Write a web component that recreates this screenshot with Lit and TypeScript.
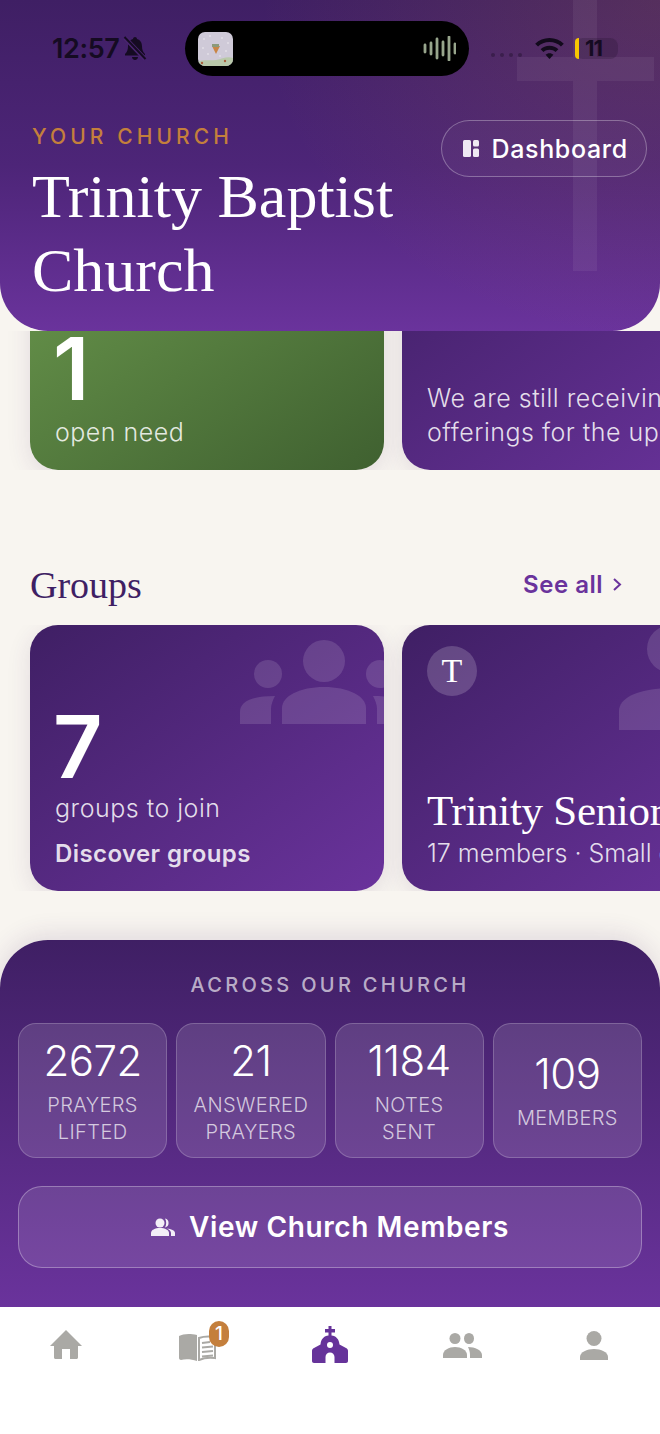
import { LitElement, html, css, svg } from "lit";
import { customElement } from "lit/decorators.js";

const peopleIcon = svg`
  <ellipse cx="84" cy="21" rx="21" ry="21"/>
  <ellipse cx="28" cy="34" rx="14" ry="14"/>
  <ellipse cx="140" cy="34" rx="14" ry="14"/>
  <path d="M42 84V68c0-12 18-21 42-21s42 9 42 21v16z"/>
  <path d="M0 84V72c0-10 10-16 35-16-2 4-4 8-4 13v15z"/>
  <path d="M168 84V72c0-10-10-16-35-16 2 4 4 8 4 13v15z"/>
`;

@customElement("app-root")
export class AppRoot extends LitElement {
  static styles = css`
    :host {
      display: block;
      width: 660px;
      height: 1434px;
      font-family: "Inter", "Liberation Sans", sans-serif;
      background: #f8f5f0;
      overflow: hidden;
    }
    .page { display: flex; flex-direction: column; height: 1434px; }
    .serif { font-family: "Liberation Serif", serif; }

    .hero {
      position: relative;
      z-index: 2;
      flex: none;
      height: 331px;
      box-sizing: border-box;
      border-radius: 0 0 48px 48px;
      overflow: hidden;
      background: linear-gradient(180deg, #3f1f64 0%, #4d2578 50%, #6a339c 100%);
    }
    .glow {
      position: absolute;
      inset: 0;
      background: radial-gradient(ellipse 400px 340px at 100% 0%, rgba(196,127,60,.17), rgba(196,127,60,0));
    }
    .cross { position: absolute; left: 517px; top: 0; fill: rgba(255,255,255,.06); }

    .status { position: relative; height: 97px; display: flex; align-items: flex-start; }
    .time { position: absolute; left: 52px; top: 33px; font-size: 27px; line-height: 32px; font-weight: 600; color: #150b22; letter-spacing: -.4px; }
    .bell { position: absolute; left: 123px; top: 36px; }
    .island { position: absolute; left: 185px; top: 21px; width: 284px; height: 55px; border-radius: 28px; background: #000; }
    .thumb { position: absolute; left: 13px; top: 11px; width: 35px; height: 34px; border-radius: 7px; overflow: hidden; }
    .wave { position: absolute; left: 238px; top: 15px; }
    .dots { position: absolute; left: 491px; top: 53px; display: flex; gap: 5px; }
    .dots i { width: 4px; height: 4px; border-radius: 50%; background: rgba(20,10,30,.35); }
    .wifi { position: absolute; left: 535px; top: 38px; }
    .battery { position: absolute; left: 575px; top: 38px; width: 43px; height: 21px; border-radius: 8px; background: rgba(20,10,30,.2); }
    .battery b { position: absolute; left: 0; top: 0; width: 4px; height: 21px; background: #f7c600; border-radius: 8px 0 0 8px; }
    .battery span { position: absolute; left: 10px; top: 0; font-size: 22px; line-height: 21px; font-weight: 700; color: #150b22; letter-spacing: -1px; }

    .hero-body { position: relative; display: flex; justify-content: space-between; padding: 0 13px 0 32px; }
    .eyebrow { margin-top: 27px; font-size: 21px; line-height: 26px; font-weight: 500; letter-spacing: 4.1px; color: #c47f3c; }
    .church { margin: 9px 0 0; font-size: 62px; line-height: 74px; font-weight: 400; color: #fff; width: 400px; }
    .dash {
      position: absolute;
      right: 13px;
      top: 23px;
      display: flex;
      align-items: center;
      gap: 13px;
      box-sizing: border-box;
      width: 206px;
      height: 57px;
      padding-left: 20.5px;
      border-radius: 29px;
      border: 1.5px solid rgba(255,255,255,.3);
      color: #fff;
      font-size: 25px;
      font-weight: 500;
      letter-spacing: .65px;
      background: rgba(255,255,255,.03);
    }

    .scroll { flex: 1; min-height: 0; overflow: hidden; display: flex; flex-direction: column; }
    .rail { display: flex; gap: 18px; padding-left: 30px; flex: none; overflow: hidden; }
    .rail.top { margin-top: -127px; }
    .card {
      position: relative;
      flex: none;
      box-sizing: border-box;
      width: 354px;
      height: 266px;
      border-radius: 28px;
      overflow: hidden;
      color: #fff;
      padding: 0 25px;
      display: flex;
      flex-direction: column;
      justify-content: flex-end;
      background: linear-gradient(145deg, #3f1f64 0%, #6a339c 100%);
      box-shadow: 0 6px 24px rgba(63,31,100,.12);
    }
    .card.green { background: linear-gradient(145deg, #6c9a4e 0%, #3f6030 100%); }
    .big { font-size: 86px; line-height: 88px; font-weight: 600; letter-spacing: -1px; margin-left: -2px; }
    .sub { font-size: 25px; line-height: 34px; font-weight: 300; color: rgba(255,255,255,.85); letter-spacing: .5px; white-space: nowrap; }
    .msg { padding-bottom: 21px; }
    .need { padding-bottom: 21px; }
    .need .big { margin-bottom: 2px; }
    .link { font-size: 24px; line-height: 30px; font-weight: 600; color: rgba(255,255,255,.85); margin-top: 14px; padding-bottom: 22px; letter-spacing: .4px; }
    .art { position: absolute; fill: rgba(255,255,255,.13); }
    .avatar {
      position: absolute; left: 25px; top: 21px; width: 50px; height: 50px; border-radius: 50%;
      background: rgba(255,255,255,.18); display: flex; align-items: center; justify-content: center;
      font-size: 34px;
    }
    .gtitle { font-size: 43px; line-height: 50px; white-space: nowrap; letter-spacing: -.3px; }
    .gsub { font-size: 25px; line-height: 34px; font-weight: 300; white-space: nowrap; color: rgba(255,255,255,.85); padding-bottom: 21px; }

    .head { display: flex; justify-content: space-between; align-items: center; padding: 81px 38px 7px 30px; height: 67px; flex: none; box-sizing: content-box; }
    .head h2 { margin: 0; font-size: 38px; line-height: 48px; font-weight: 400; color: #3f1f64; }
    .see { display: flex; align-items: center; gap: 9px; font-size: 24px; font-weight: 600; color: #6a339c; letter-spacing: .5px; }

    .across {
      flex: none;
      margin-top: 49px;
      height: 367px;
      box-sizing: border-box;
      padding: 30px 18px 0 18px;
      border-radius: 48px 48px 0 0;
      background: linear-gradient(180deg, #3f1f64 0%, #6a339c 100%);
      box-shadow: 0 -6px 24px rgba(63,31,100,.12);
      color: #fff;
    }
    .across h3 { margin: 0; text-align: center; font-size: 20px; line-height: 30px; font-weight: 500; letter-spacing: 3.3px; color: rgba(255,255,255,.65); }
    .stats { display: grid; grid-template-columns: repeat(4, 1fr); gap: 9px; margin-top: 23px; }
    .stat {
      box-sizing: border-box; height: 135px; border-radius: 18px;
      background: rgba(255,255,255,.125); border: 1.5px solid rgba(255,255,255,.2);
      display: flex; flex-direction: column; align-items: center; justify-content: center; text-align: center;
    }
    .num { font-size: 42px; line-height: 50px; font-weight: 300; letter-spacing: -.5px; margin-bottom: 6px; }
    .lab { font-size: 20px; line-height: 27px; font-weight: 300; letter-spacing: .4px; color: rgba(255,255,255,.72); text-transform: uppercase; }
    .btn {
      box-sizing: border-box; margin-top: 28px; height: 82px; border-radius: 24px;
      background: rgba(255,255,255,.11); border: 1.5px solid rgba(255,255,255,.3);
      display: flex; align-items: center; justify-content: center; gap: 14px;
      font-size: 28px; font-weight: 600; letter-spacing: .6px;
    }

    .nav { flex: none; height: 127px; background: #fff; display: grid; grid-template-columns: repeat(5, 132px); }
    .tab { position: relative; display: flex; justify-content: center; align-items: flex-start; color: #aaa9a5; fill: currentColor; padding-top: 19px; }
    .tab.on { color: #66339a; }
    .badge {
      position: absolute; left: 77px; top: 14px; width: 20px; height: 26px; border-radius: 10px;
      background: #c47f3c; color: #fff; font-size: 19px; line-height: 26px; font-weight: 500; text-align: center;
    }
  `;

  render() {
    return html`
      <div class="page">
        <header class="hero">
          <div class="glow"></div>
          <svg class="cross" width="137" height="271" viewBox="0 0 137 271">
            <path d="M56 0h24v57h57v24H80v190H56V81H0V57h56z"/>
          </svg>
          <div class="status">
            <span class="time">12:57</span>
            <svg class="bell" width="24" height="25" viewBox="0 0 24 25" fill="#150b22">
              <path d="M12 1c-1 0-2 .8-2 2C6.500 4 5 7 5 10.500c0 3.500-1 5.500-3 7.500v1.500h20V18c-2-2-3-4-3-7.500C19 7 17.500 4 14 3c0-1.200-1-2-2-2z"/>
              <path d="M9 21h6c0 1.600-1.300 3-3 3s-3-1.400-3-3z"/>
              <path d="M2 2l20 21" stroke="#4a2570" stroke-width="4.500"/>
              <path d="M1.500 1l21 22" stroke="#150b22" stroke-width="2"/>
            </svg>
            <div class="island">
              <div class="thumb">
                <svg width="35" height="34" viewBox="0 0 35 34">
                  <rect width="35" height="34" fill="#cfcad8"/>
                  <g fill="#eeecf2">
                    <circle cx="6" cy="7" r=".8"/><circle cx="12" cy="4" r=".8"/><circle cx="24" cy="6" r=".8"/>
                    <circle cx="30" cy="11" r=".8"/><circle cx="5" cy="16" r=".8"/><circle cx="28" cy="19" r=".8"/>
                    <circle cx="10" cy="22" r=".8"/><circle cx="22" cy="24" r=".8"/>
                  </g>
                  <path d="M14 14h8l-4 8z" fill="#c98545"/>
                  <path d="M14 12h7v3h-7z" fill="#8c9a7a"/>
                  <path d="M0 30c6-3 12-1 18-2s11-4 17-2v8H0z" fill="#b9c9aa"/>
                  <circle cx="4" cy="31" r="1.200" fill="#a8623f"/>
                  <circle cx="27" cy="29" r="1.200" fill="#a8623f"/>
                </svg>
              </div>
              <svg class="wave" width="33" height="25" viewBox="0 0 33 25" stroke="#97a58c" stroke-width="2.800" stroke-linecap="round">
                <path d="M2 9v7M8 7v11M14 3v19M20 6v13M26 1v23M32 8v9"/>
              </svg>
            </div>
            <div class="dots"><i></i><i></i><i></i><i></i></div>
            <svg class="wifi" width="29" height="21" viewBox="0 0 30 22" fill="#120a1c">
              <path d="M15 0C9 0 4 2.300 0 6l3 3c3-3 7.200-4.700 12-4.700S24 6 27 9l3-3C26 2.300 21 0 15 0z"/>
              <path d="M15 8c-3.700 0-7 1.400-9.300 3.700l3 3C10.300 13 12.500 12.200 15 12.200s4.700.8 6.300 2.500l3-3C22 9.400 18.700 8 15 8z"/>
              <path d="M15 16c-1.700 0-3.100.6-4.100 1.600L15 22l4.100-4.400c-1-1-2.400-1.600-4.100-1.600z"/>
            </svg>
            <div class="battery"><b></b><span>11</span></div>
          </div>
          <div class="hero-body">
            <div>
              <div class="eyebrow">YOUR CHURCH</div>
              <h1 class="church serif">Trinity Baptist Church</h1>
            </div>
            <div class="dash">
              <svg width="16" height="17" viewBox="0 0 16 17" fill="#eee9f2">
                <rect x="0" y="0" width="8" height="17" rx="1.500"/>
                <rect x="10" y="0" width="6" height="6.500" rx="1.500"/>
                <rect x="10" y="8.500" width="6" height="8.500" rx="1.500"/>
              </svg>
              Dashboard
            </div>
          </div>
        </header>

        <main class="scroll">
          <div class="rail top">
            <div class="card green need">
              <div class="big">1</div>
              <div class="sub">open need</div>
            </div>
            <div class="card msg">
              <div class="sub">We are still receiving</div>
              <div class="sub">offerings for the upcoming</div>
            </div>
          </div>

          <div class="head">
            <h2 class="serif">Groups</h2>
            <span class="see">See all
              <svg width="10" height="15" viewBox="0 0 10 15" fill="none" stroke="#6a339c" stroke-width="2"><path d="M2 2l6 5.500L2 13"/></svg>
            </span>
          </div>

          <div class="rail">
            <div class="card">
              <svg class="art" style="left:210px;top:15px" width="168" height="84" viewBox="0 0 168 84">${peopleIcon}</svg>
              <div class="big">7</div>
              <div class="sub">groups to join</div>
              <div class="link">Discover groups</div>
            </div>
            <div class="card">
              <svg class="art" style="left:217px;top:0" width="137" height="105" viewBox="0 0 137 105">
                <ellipse cx="52" cy="24" rx="24" ry="24"/>
                <path d="M0 105V86c0-15 24-23 52-23s52 8 52 23v19z"/>
              </svg>
              <div class="avatar serif">T</div>
              <div class="gtitle serif">Trinity Senior Saints</div>
              <div class="gsub">17 members · Small group</div>
            </div>
          </div>

          <section class="across">
            <h3>ACROSS OUR CHURCH</h3>
            <div class="stats">
              <div class="stat"><div class="num">2672</div><div class="lab">Prayers<br />Lifted</div></div>
              <div class="stat"><div class="num">21</div><div class="lab">Answered<br />Prayers</div></div>
              <div class="stat"><div class="num">1184</div><div class="lab">Notes<br />Sent</div></div>
              <div class="stat"><div class="num">109</div><div class="lab">Members</div></div>
            </div>
            <div class="btn">
              <svg width="24" height="19" viewBox="0 0 24 19" fill="#f3eef7">
                <circle cx="9" cy="5" r="4.500"/>
                <path d="M0 18v-3c0-3 4-5 9-5s9 2 9 5v3z"/>
                <path d="M14 .6a4.500 4.500 0 0 1 0 8.800c1.600-2.600 1.600-6.200 0-8.800zM16 10.500c4 .5 8 2 8 4.500v3h-4v-3c0-1.800-1.500-3.400-4-4.500z"/>
              </svg>
              View Church Members
            </div>
          </section>
        </main>

        <nav class="nav">
          <div class="tab">
            <svg style="margin-top:4px" width="32" height="29" viewBox="0 0 32 29">
              <path d="M16 0L0 16h4v11.500c0 .8.700 1.500 1.500 1.500H12V19h8v10h6.500c.8 0 1.500-.7 1.500-1.500V16h4z"/>
            </svg>
          </div>
          <div class="tab">
            <svg style="margin-top:7px" width="39" height="28" viewBox="0 0 39 28">
              <path d="M0 3c4-2 10-3 18-1v26c-6-2-12-2-16-1-1 0-2-1-2-2z"/>
              <path d="M20 5c4-1.500 9-2 16-1v21c-6-.8-11-.3-16 2z" fill="#fff" stroke="#aaa9a5" stroke-width="2"/>
              <path d="M23 10l8-1M23 14.500l11-1M23 19l11-1M23 23.500l11-1" stroke="#aaa9a5" stroke-width="2"/>
            </svg>
            <span class="badge">1</span>
          </div>
          <div class="tab on">
            <svg width="36" height="37" viewBox="0 0 36 37">
              <path d="M16.500 0h3v3H23v3.500h-3.500v3C24 10 27 13 27.500 18.500L34 22c1.300.7 2 1.500 2 3v10c0 1.200-.8 2-2 2H22.500v-6c0-2.500-2-4.500-4.500-4.500s-4.500 2-4.500 4.500v6H2c-1.200 0-2-.8-2-2V25c0-1.500.7-2.300 2-3l6.500-3.500C9 13 12 10 16.500 9.500v-3H13V3h3.500z"/>
              <circle cx="18" cy="19" r="3" fill="#fff"/>
            </svg>
          </div>
          <div class="tab">
            <svg style="margin-top:7px" width="39" height="25" viewBox="0 0 39 25">
              <ellipse cx="12" cy="5.500" rx="5.500" ry="5.500"/>
              <ellipse cx="26" cy="5.500" rx="5" ry="5.500"/>
              <path d="M0 25v-3c0-5 6-8 12-8s12 3 12 8v3z"/>
              <path d="M25 14c7 0 14 3 14 8v3H27v-3c0-3-1-6-2-8z"/>
            </svg>
          </div>
          <div class="tab">
            <svg style="margin-top:5px" width="28" height="29" viewBox="0 0 28 29">
              <ellipse cx="14" cy="7.500" rx="7.500" ry="7.500"/>
              <path d="M0 29v-3c0-5 7-8 14-8s14 3 14 8v3z"/>
            </svg>
          </div>
        </nav>
      </div>
    `;
  }
}
